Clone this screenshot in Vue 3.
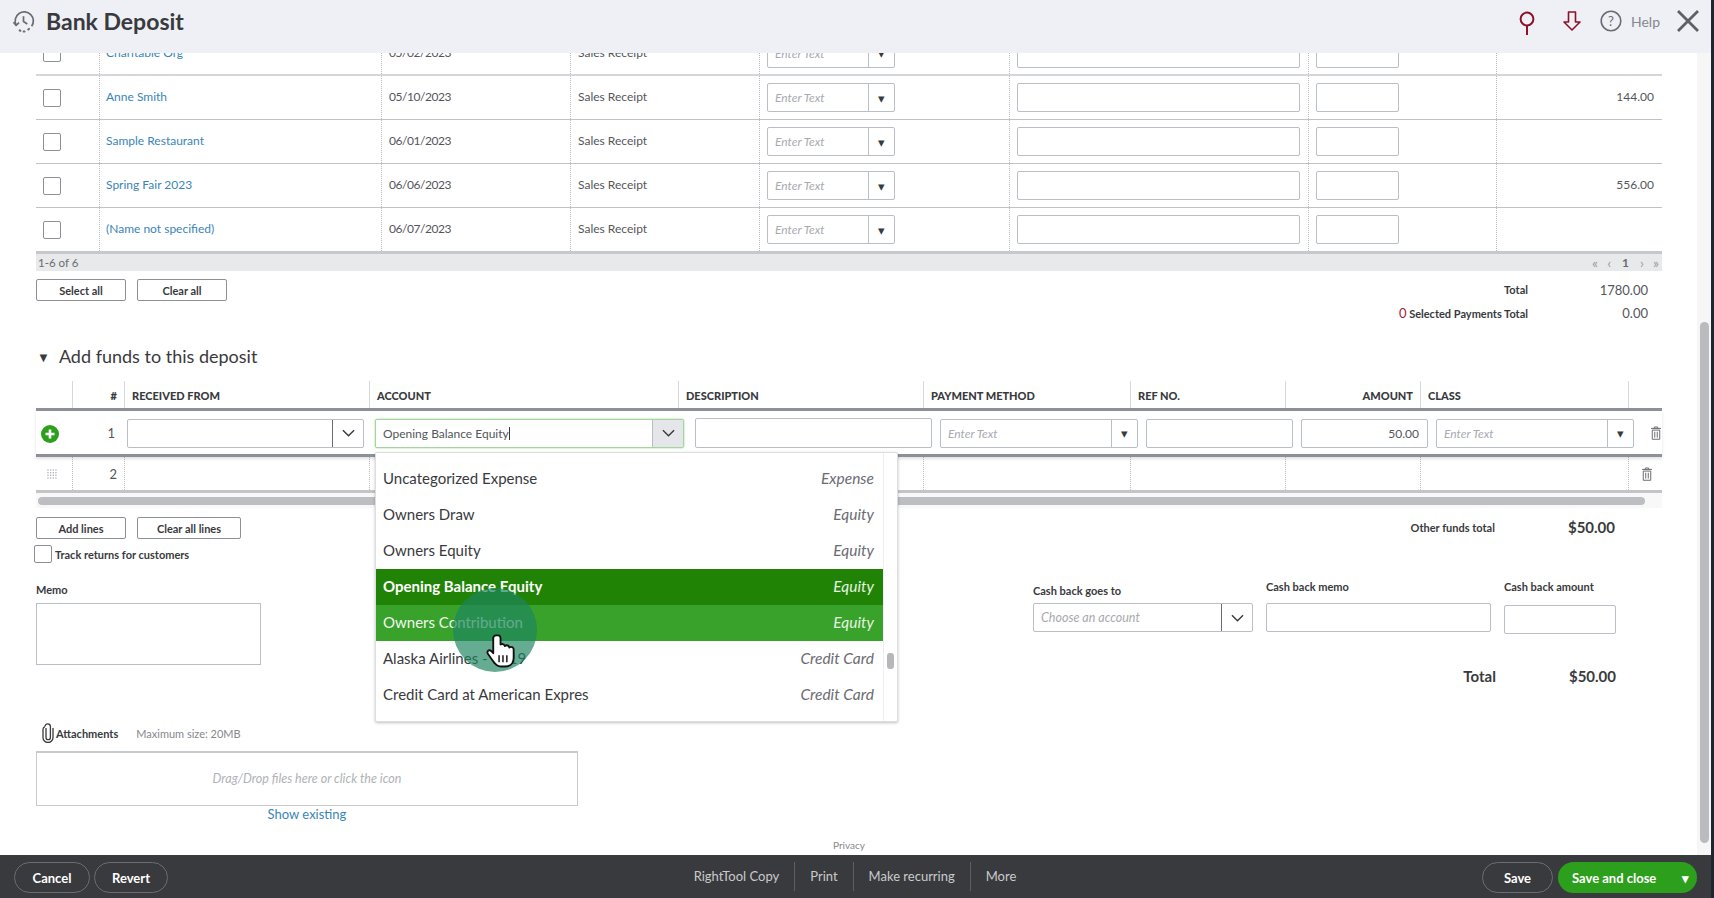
<template>
  <div class="page">
    <header class="topbar">
      <svg class="hist" viewBox="0 0 24 24" fill="none" stroke="#6b6c72" stroke-width="1.8">
        <path d="M4.2 15.5A9.5 9.5 0 1 1 20.5 17" />
        <path d="M1.5 12.8l2.8 3.2 3-2.8" stroke-linejoin="round" />
        <path d="M12 6.5V12l4 2.5" />
        <path d="M8 21.3l.8.3M12.2 22.4h.8M17 20.4l.7-.6" stroke-linecap="round" stroke-width="2.2" />
      </svg>
      <h1>Bank Deposit</h1>
      <div class="top-icons">
        <svg class="pin" viewBox="0 0 16 24" fill="none" stroke="#8d1127" stroke-width="2"><circle cx="8" cy="8" r="6.4" /><path d="M8 14.5V24" /></svg>
        <svg class="arrow" viewBox="0 0 18 20" fill="none" stroke="#8d1127" stroke-width="1.6"><path d="M5.500 1h7v10H17L9 19 1 11h4.500z" stroke-linejoin="round" /></svg>
        <svg class="help" viewBox="0 0 22 22" fill="none" stroke="#6b6c72" stroke-width="1.600"><circle cx="11" cy="11" r="9.800" /><text x="11" y="15.500" text-anchor="middle" class="q">?</text></svg>
        <span class="help-txt">Help</span>
        <svg class="close" viewBox="0 0 22 22" fill="none" stroke="#5f6064" stroke-width="2.800"><path d="M1 1l20 20M21 1L1 21" /></svg>
      </div>
    </header>

    <main class="content">
      <div class="inner">
        <div v-for="row in payments" :key="row.name" class="pay-row">
          <div class="cell"><span class="check"></span></div>
          <div class="cell dot txt link">{{ row.name }}</div>
          <div class="cell dot txt date">{{ row.date }}</div>
          <div class="cell dot txt">Sales Receipt</div>
          <div class="cell dot">
            <div class="picker pay-pick"><span class="hint">Enter Text</span><span class="caret">&#9662;</span></div>
          </div>
          <div class="cell dot"><div class="field memo-in"></div></div>
          <div class="cell dot"><div class="field ref-in"></div></div>
          <div class="cell dot txt amt">{{ row.amount }}</div>
        </div>
        <div class="pay-foot">
          <span>1-6 of 6</span>
          <span class="pager"><i>&laquo;</i><i>&lsaquo;</i><b>1</b><i>&rsaquo;</i><i>&raquo;</i></span>
        </div>

        <div class="select-row">
          <div class="btns">
            <button class="ghost w90">Select all</button>
            <button class="ghost w90">Clear all</button>
          </div>
          <div class="totals">
            <div class="tot-line"><b>Total</b><span>1780.00</span></div>
            <div class="tot-line"><b><i class="red">0</i> Selected Payments Total</b><span>0.00</span></div>
          </div>
        </div>

        <h2 class="funds-title"><span class="tri">&#9660;</span>Add funds to this deposit</h2>

        <div class="funds">
          <div class="funds-head">
            <div class="hc"></div>
            <div class="hc num">#</div>
            <div class="hc">RECEIVED FROM</div>
            <div class="hc">ACCOUNT</div>
            <div class="hc">DESCRIPTION</div>
            <div class="hc">PAYMENT METHOD</div>
            <div class="hc">REF NO.</div>
            <div class="hc right">AMOUNT</div>
            <div class="hc">CLASS</div>
            <div class="hc"></div>
          </div>

          <div class="line-one">
            <div class="plus-cell">
              <svg class="plus" viewBox="0 0 18 18"><circle cx="9" cy="9" r="9" fill="#2ca01c" /><path d="M9 4.500v9M4.500 9h9" stroke="#fff" stroke-width="2.600" /></svg>
            </div>
            <div class="n-cell">1</div>
            <div class="combo rec"><span class="grow"></span><span class="chev"><svg viewBox="0 0 14 8" fill="none" stroke="#393a3d" stroke-width="1.500"><path d="M1 1l6 6 6-6" /></svg></span></div>
            <div class="account-wrap">
              <div class="combo acct">
                <span class="grow">Opening Balance Equity<span class="cursor-bar"></span></span>
                <span class="chev on"><svg viewBox="0 0 14 8" fill="none" stroke="#393a3d" stroke-width="1.500"><path d="M1 1l6 6 6-6" /></svg></span>
              </div>
              <div class="menu">
                <div class="menu-list">
                  <div v-for="item in accounts" :key="item.name" class="menu-item" :class="item.state">
                    <span>{{ item.name }}</span><em>{{ item.type }}</em>
                  </div>
                </div>
                <div class="menu-gutter"><span class="menu-thumb"></span></div>
                <div class="ripple"></div>
                <svg class="hand" viewBox="0 0 30 36">
                  <path d="M9.500 2.500c-1.800 0-3 1.300-3 3v15.300l-2.200-2.300c-1.500-1.500-3.800-.6-3.800 1.300 0 .7.300 1.300.8 2l5.700 8c2 2.900 4.200 4.700 8.500 4.700h3c5.700 0 9-3.700 9-9v-8.500c0-1.600-1.200-2.800-2.600-2.800-.7 0-1.300.2-1.800.7-.3-1.400-1.400-2.300-2.700-2.300-.8 0-1.500.3-2 .8-.4-1.300-1.400-2.100-2.700-2.100-.6 0-1.200.2-1.700.5V5.500c0-1.700-1.200-3-2.500-3z" fill="#fff" stroke="#111" stroke-width="1.900" stroke-linejoin="round" />
                  <path d="M12.500 23v7M16.500 23v7M20.500 23v7" stroke="#111" stroke-width="1.500" />
                </svg>
              </div>
            </div>
            <div class="field desc"></div>
            <div class="picker pm"><span class="hint">Enter Text</span><span class="caret">&#9662;</span></div>
            <div class="field refno"></div>
            <div class="field amount-in">50.00</div>
            <div class="picker cls"><span class="hint">Enter Text</span><span class="caret">&#9662;</span></div>
            <svg class="trash t1" viewBox="0 0 12 16" fill="none" stroke="#6b6c72" stroke-width="1.200"><path d="M0 2.500h12M4 2.500V.8h4v1.700" /><path d="M1.500 4.500h9V15.500h-9zM4.500 6.500v7M7.500 6.500v7" /></svg>
          </div>

          <div class="line-two">
            <div class="l2 grip-cell"><svg class="grip" viewBox="0 0 10 10" fill="#a9abb0"><circle v-for="d in gripDots" :key="d.k" :cx="d.x" :cy="d.y" r=".75" /></svg></div>
            <div class="l2 n2">2</div>
            <div class="l2"></div>
            <div class="l2"></div>
            <div class="l2"></div>
            <div class="l2"></div>
            <div class="l2"></div>
            <div class="l2"></div>
            <div class="l2"></div>
            <div class="l2 trash-cell"><svg class="trash" viewBox="0 0 12 16" fill="none" stroke="#6b6c72" stroke-width="1.200"><path d="M0 2.500h12M4 2.500V.8h4v1.700" /><path d="M1.500 4.500h9V15.500h-9zM4.500 6.500v7M7.500 6.500v7" /></svg></div>
          </div>
          <div class="h-scroll"><span></span></div>
        </div>

        <div class="lines-row">
          <div class="btns">
            <button class="ghost w90">Add lines</button>
            <button class="ghost w104">Clear all lines</button>
          </div>
          <div class="other-tot"><b>Other funds total</b><strong>$50.00</strong></div>
        </div>

        <label class="track"><span class="check"></span>Track returns for customers</label>

        <div class="lower">
          <div class="memo-col">
            <div class="lbl">Memo</div>
            <div class="memo-box"></div>
          </div>
          <div class="cash-col">
            <div class="cash-fields">
              <div class="cf goes">
                <div class="lbl">Cash back goes to</div>
                <div class="combo thin"><span class="grow hint">Choose an account</span><span class="chev"><svg viewBox="0 0 14 8" fill="none" stroke="#393a3d" stroke-width="1.500"><path d="M1 1l6 6 6-6" /></svg></span></div>
              </div>
              <div class="cf cmemo">
                <div class="lbl">Cash back memo</div>
                <div class="field"></div>
              </div>
              <div class="cf camt">
                <div class="lbl">Cash back amount</div>
                <div class="field"></div>
              </div>
            </div>
            <div class="grand"><b>Total</b><strong>$50.00</strong></div>
          </div>
        </div>

        <div class="attach">
          <svg class="clip" viewBox="0 0 12 20" fill="none" stroke="#393a3d" stroke-width="1.300"><path d="M4 5v9.500a2.200 2.200 0 0 0 4.400 0V3.600a2.700 2.700 0 0 0-5.400 0" /><path d="M3 3.600C1.500 4 1 5 1 6.500v8a5 5 0 0 0 10 0V5" /></svg>
          <b>Attachments</b>
          <span>Maximum size: 20MB</span>
        </div>
        <div class="drop">Drag/Drop files here or click the icon</div>
        <a class="existing">Show existing</a>
        <div class="privacy">Privacy</div>
      </div>
      <div class="v-scroll"><span></span></div>
    </main>

    <footer class="bottombar">
      <div class="foot-left">
        <button class="pill">Cancel</button>
        <button class="pill revert">Revert</button>
      </div>
      <nav class="foot-mid">
        <a>RightTool Copy</a>
        <a>Print</a>
        <a>Make recurring</a>
        <a>More</a>
      </nav>
      <div class="foot-right">
        <button class="pill save">Save</button>
        <button class="primary"><span>Save and close</span><i>&#9662;</i></button>
      </div>
    </footer>
  </div>
</template>

<script setup>
const payments = [
  { name: 'Charitable Org', date: '05/02/2023', amount: '' },
  { name: 'Anne Smith', date: '05/10/2023', amount: '144.00' },
  { name: 'Sample Restaurant', date: '06/01/2023', amount: '' },
  { name: 'Spring Fair 2023', date: '06/06/2023', amount: '556.00' },
  { name: '(Name not specified)', date: '06/07/2023', amount: '' }
]

const accounts = [
  { name: 'Uncategorized Expense', type: 'Expense' },
  { name: 'Owners Draw', type: 'Equity' },
  { name: 'Owners Equity', type: 'Equity' },
  { name: 'Opening Balance Equity', type: 'Equity', state: 'selected' },
  { name: 'Owners Contribution', type: 'Equity', state: 'hovered' },
  { name: 'Alaska Airlines - 1119', type: 'Credit Card' },
  { name: 'Credit Card at American Expres', type: 'Credit Card' }
]

// 4x4 drag handle
const gripDots = []
for (let x = 0; x < 4; x++) {
  for (let y = 0; y < 4; y++) {
    gripDots.push({ k: x + '-' + y, x: 1 + x * 2.65, y: 1 + y * 2.65 })
  }
}
</script>

<style>
html, body {
  margin: 0;
  background: #1f2530;
}
</style>

<style scoped>
.page {
  width: 1711px;
  height: 898px;
  display: flex;
  flex-direction: column;
  overflow: hidden;
  background: #fff;
  font-family: Lato, "Open Sans", sans-serif;
  font-size: 12px;
  color: #54565b;
}

/* top bar */
.topbar {
  height: 53px;
  flex: none;
  display: flex;
  align-items: center;
  box-sizing: border-box;
  padding: 0 12px 11px;
  background: #eef0f5;
}
.hist { width: 23px; height: 23px; margin-right: 11px; }
h1 {
  margin: 0;
  font-size: 23px;
  font-weight: 700;
  color: #393a3d;
}
.top-icons {
  margin-left: auto;
  display: flex;
  align-items: center;
}
.pin { width: 16px; height: 24px; margin-right: 28px; margin-top: 3px; }
.arrow { width: 18px; height: 20px; margin-right: 19px; }
.help { width: 22px; height: 22px; margin-right: 9px; }
.q { font: 13px Lato, sans-serif; fill: #6b6c72; stroke: none; }
.help-txt { font-size: 14px; color: #85878c; margin-right: 17px; }
.close { width: 22px; height: 22px; }

/* scrolled content */
.content {
  flex: 1;
  position: relative;
  overflow: hidden;
}
.inner {
  margin-top: -21px;
  padding-left: 36px;
  width: 1626px;
}
.pay-row {
  display: grid;
  grid-template-columns: 63px 282px 189px 189px 250px 299px 188px 166px;
  height: 44px;
  box-sizing: border-box;
  border-bottom: 1px solid #bfc1c5;
}
.pay-row:first-child { border-bottom: 2px solid #d4d6da; }
.cell {
  display: flex;
  align-items: center;
  padding-left: 7px;
}
.txt { padding-bottom: 2px; box-sizing: border-box; }
.dot { border-left: 1px dotted #b9bbbf; }
.link { color: #3a85b8; padding-left: 6px; }
.date { letter-spacing: -0.45px; }
.amt { justify-content: flex-end; padding-right: 8px; }
.check {
  display: block;
  width: 16px;
  height: 16px;
  flex: none;
  border: 1px solid #8d9096;
  border-radius: 2px;
  background: #fff;
}
.field, .picker {
  box-sizing: border-box;
  height: 29px;
  border: 1px solid #babec5;
  border-radius: 2px;
  background: #fff;
}
.memo-in { width: 283px; }
.ref-in { width: 83px; }
.picker {
  display: flex;
  align-items: center;
  justify-content: space-between;
}
.pay-pick { width: 128px; }
.hint {
  font-style: italic;
  color: #a8aaaf;
  padding-left: 7px;
  font-size: 12px;
}
.caret {
  width: 26px;
  height: 100%;
  box-sizing: border-box;
  border-left: 1px solid #babec5;
  display: flex;
  align-items: center;
  justify-content: center;
  color: #393a3d;
  font-size: 13px;
}
.pay-foot {
  height: 20px;
  box-sizing: border-box;
  margin-top: -1px;
  border-top: 3px solid #c6c8cc;
  background: #e8e9ea;
  display: flex;
  align-items: center;
  justify-content: space-between;
  padding: 0 3px 0 2px;
  font-size: 11.5px;
  color: #6b6c72;
}
.pager {
  display: flex;
  gap: 9px;
  color: #9a9ca1;
  font-size: 14px;
  line-height: 14px;
}
.pager i { font-style: normal; }
.pager b { color: #6b6c72; font-weight: 700; font-size: 12px; padding: 0 2px; }

.select-row {
  display: flex;
  justify-content: space-between;
  margin-top: 8px;
  height: 63px;
}
.btns { display: flex; gap: 11px; }
.ghost {
  height: 22px;
  box-sizing: border-box;
  padding: 0;
  border: 1px solid #8d9096;
  border-radius: 2px;
  background: #fff;
  font: 700 11px Lato, sans-serif;
  color: #393a3d;
}
.w90 { width: 90px; }
.w104 { width: 104px; }
.totals { width: 300px; margin-right: 14px; display: flex; flex-direction: column; gap: 2px; }
.tot-line {
  display: flex;
  justify-content: flex-end;
  height: 21px;
  align-items: center;
  font-size: 13px;
  color: #54565b;
}
.tot-line b {
  font-size: 11px;
  color: #393a3d;
}
.tot-line span {
  width: 120px;
  text-align: right;
}
.red { color: #a41e34; font-style: normal; font-weight: 400; font-size: 13px; }

.funds-title {
  margin: 0;
  height: 28px;
  line-height: 28px;
  font-size: 18px;
  font-weight: 400;
  color: #393a3d;
}
.tri { font-size: 13px; margin: 0 9px 0 1px; vertical-align: 1px; }

.funds { margin-top: 11px; }
.funds-head {
  display: grid;
  grid-template-columns: 36px 52px 245px 309px 245px 207px 155px 135px 208px 34px;
  height: 30px;
  border-bottom: 3px solid #8d9096;
  box-sizing: border-box;
}
.hc {
  border-left: 1px solid #d6d8dc;
  padding: 2px 0 0 7px;
  display: flex;
  align-items: center;
  font-size: 11px;
  font-weight: 900;
  color: #393a3d;
}
.hc:first-child { border-left: 0; }
.hc.num { justify-content: flex-end; padding-right: 7px; }
.hc.right { justify-content: flex-end; padding-right: 7px; }

.line-one {
  height: 46px;
  padding-top: 1px;
  display: flex;
  align-items: center;
  box-sizing: border-box;
  border-bottom: 3px solid #8d9096;
  box-shadow: 0 2px 3px rgba(0, 0, 0, 0.12);
  position: relative;
}
.plus-cell { width: 36px; flex: none; display: flex; padding: 2px 0 0 5px; box-sizing: border-box; }
.plus { width: 18px; height: 18px; }
.n-cell { width: 44px; text-align: right; flex: none; margin-right: 12px; font-size: 13px; margin-left: -1px; }
.combo {
  height: 29px;
  box-sizing: border-box;
  display: flex;
  align-items: center;
  border: 1px solid #babec5;
  border-radius: 2px;
  background: #fff;
}
.grow { flex: 1; }
.rec { width: 237px; margin-right: 11px; flex: none; }
.chev {
  width: 31px;
  height: 100%;
  border-left: 1px solid #6b6c72;
  display: flex;
  align-items: center;
  justify-content: center;
  box-sizing: border-box;
}
.chev svg { width: 13px; height: 8px; }
.chev.on { background: #e4e6ea; border-left-color: #babec5; }
.account-wrap { width: 309px; margin-right: 11px; flex: none; position: relative; }
.acct {
  border-color: #a5d49f;
  box-shadow: 0 0 2px #8fcf87;
  font-size: 12px;
}
.acct .grow { padding-left: 7px; color: #54565b; }
.cursor-bar {
  display: inline-block;
  width: 1px;
  height: 13px;
  background: #393a3d;
  vertical-align: -2px;
}
.desc { width: 237px; margin-right: 8px; flex: none; height: 30px; }
.pm { width: 198px; margin-right: 8px; flex: none; }
.refno { width: 147px; margin-right: 8px; flex: none; }
.amount-in {
  width: 127px;
  margin-right: 8px;
  flex: none;
  text-align: right;
  padding-right: 8px;
  line-height: 27px;
}
.cls { width: 198px; flex: none; }
.trash { width: 10px; height: 14px; }
.t1 { margin-left: 17px; }

/* account dropdown sits over the lines below */
.menu {
  position: absolute;
  top: 33px;
  left: 0;
  width: 523px;
  height: 270px;
  box-sizing: border-box;
  background: #fff;
  border: 1px solid #dcdee2;
  border-radius: 2px;
  box-shadow: 0 1px 3px rgba(0, 0, 0, 0.25);
  display: flex;
  overflow: hidden;
  z-index: 3;
}
.menu-list { flex: 1; padding-top: 8px; }
.menu-item {
  height: 36px;
  box-sizing: border-box;
  display: flex;
  align-items: center;
  justify-content: space-between;
  padding: 0 9px 2px 7px;
  font-size: 15px;
  color: #393a3d;
}
.menu-item em { color: #6b6c72; font-size: 15.5px; }
.selected { background: #218306; color: #fff; font-weight: 700; }
.selected em, .hovered em { color: #e4f2e0; font-weight: 400; }
.hovered { background: #38a22b; color: #f2f8f0; }
.menu-gutter {
  width: 13px;
  flex: none;
  border-left: 1px solid #eceef0;
  position: relative;
}
.menu-thumb {
  position: absolute;
  left: 3px;
  top: 200px;
  width: 7px;
  height: 16px;
  border-radius: 3px;
  background: #b5b7ba;
}
.ripple {
  position: absolute;
  left: 77px;
  top: 135px;
  width: 84px;
  height: 84px;
  border-radius: 50%;
  background: rgba(29, 132, 96, 0.68);
}
.hand {
  position: absolute;
  left: 110px;
  top: 180px;
  width: 31px;
  height: 35px;
}

.line-two {
  display: grid;
  grid-template-columns: 36px 52px 245px 309px 245px 207px 155px 135px 208px 34px;
  height: 36px;
  box-sizing: border-box;
  border-bottom: 3px solid #c2c4c8;
}
.l2 { border-left: 1px dotted #b9bbbf; display: flex; align-items: center; }
.l2:first-child { border-left: 0; }
.grip-cell { justify-content: center; padding-right: 4px; }
.grip { width: 10px; height: 10px; }
.n2 { justify-content: flex-end; padding-right: 7px; font-size: 13px; }
.trash-cell { padding-left: 13px; }
.h-scroll {
  height: 15px;
  background: #f8f8f8;
  display: flex;
  align-items: center;
  padding: 0 17px 0 2px;
}
.h-scroll span {
  flex: 1;
  height: 8px;
  border-radius: 4px;
  background: #bcbec1;
}

.lines-row {
  margin-top: 9px;
  height: 22px;
  display: flex;
  justify-content: space-between;
}
.other-tot {
  display: flex;
  align-items: center;
  margin-right: 47px;
  margin-top: 4px;
  height: 12px;
}
.other-tot b { font-size: 11px; color: #393a3d; margin-right: 73px; }
.other-tot strong, .grand strong { font-size: 15px; color: #393a3d; font-weight: 700; }

.track {
  display: flex;
  align-items: center;
  gap: 3px;
  margin: 6px 0 0 -2px;
  font-size: 11px;
  font-weight: 700;
  color: #393a3d;
}

.lower {
  display: flex;
  margin-top: 17px;
  height: 143px;
}
.lbl { font-size: 11px; line-height: 14px; font-weight: 700; color: #393a3d; }
.memo-col { width: 997px; flex: none; padding-top: 3px; }
.memo-box {
  box-sizing: border-box;
  width: 225px;
  height: 62px;
  margin-top: 6px;
  border: 1px solid #babec5;
}
.cash-col { flex: 1; }
.cash-fields { display: flex; gap: 13px; align-items: flex-start; }
.goes { width: 220px; }
.goes .lbl { margin: 4px 0 5px; }
.cmemo { width: 225px; }
.cmemo .lbl { margin-bottom: 9px; }
.camt { width: 112px; }
.camt .lbl { margin-bottom: 11px; }
.thin .hint { padding-left: 7px; font-size: 12.5px; }
.thin .chev { width: 31px; }
.grand {
  display: flex;
  justify-content: flex-end;
  align-items: center;
  width: 583px;
  margin-top: 33px;
}
.grand b { font-size: 15px; color: #393a3d; margin-right: 73px; }

.attach {
  display: flex;
  align-items: center;
  height: 20px;
  padding-left: 6px;
  font-size: 11px;
  color: #85878c;
}
.clip { width: 12px; height: 20px; margin-right: 2px; }
.attach b { color: #393a3d; margin-right: 18px; }
.drop {
  width: 542px;
  height: 55px;
  margin-top: 8px;
  padding-bottom: 2px;
  box-sizing: border-box;
  border: 1px solid #c8cacd;
  border-top-width: 2px;
  display: flex;
  align-items: center;
  justify-content: center;
  font-style: italic;
  font-size: 12.5px;
  color: #b0b2b6;
}
.existing {
  display: block;
  width: 542px;
  text-align: center;
  font-size: 13px;
  line-height: 17px;
  color: #3a85b8;
}
.privacy {
  text-align: center;
  font-size: 10px;
  line-height: 12px;
  margin-top: 16px;
  color: #85878c;
}
.v-scroll {
  position: absolute;
  right: 0;
  top: 0;
  bottom: 0;
  width: 14px;
  background: #f6f6f7;
}
.v-scroll span {
  position: absolute;
  left: 3px;
  top: 269px;
  bottom: 12px;
  width: 9px;
  border-radius: 5px;
  background: #b9bbbe;
}

/* bottom bar */
.bottombar {
  height: 43px;
  flex: none;
  display: flex;
  align-items: center;
  justify-content: space-between;
  position: relative;
  background: #393a3d;
  padding: 0 14px;
  box-sizing: border-box;
}
.foot-left, .foot-right { display: flex; gap: 4px; align-items: center; margin-top: 2px; }
.pill {
  height: 31px;
  width: 76px;
  padding: 0;
  border: 1px solid #6b6c72;
  border-radius: 16px;
  background: transparent;
  color: #fff;
  font: 700 13px Lato, sans-serif;
}
.pill.revert { width: 74px; }
.pill.save { width: 71px; }
.foot-mid {
  display: flex;
  align-items: center;
  margin-left: 60px;
  font-size: 13px;
  color: #c9cacc;
}
.foot-mid a {
  padding: 0 15px;
  line-height: 29px;
  border-left: 1px solid #5c5e62;
}
.foot-mid a:first-child { border-left: 0; }
.primary {
  width: 139px;
  height: 31px;
  margin-left: 1px;
  border: 0;
  border-radius: 16px;
  background: #2ca01c;
  color: #fff;
  font: 700 13px Lato, sans-serif;
  display: flex;
  align-items: center;
  justify-content: space-between;
  padding: 0 8px 0 14px;
}
.primary i { font-style: normal; font-size: 13px; }
</style>
